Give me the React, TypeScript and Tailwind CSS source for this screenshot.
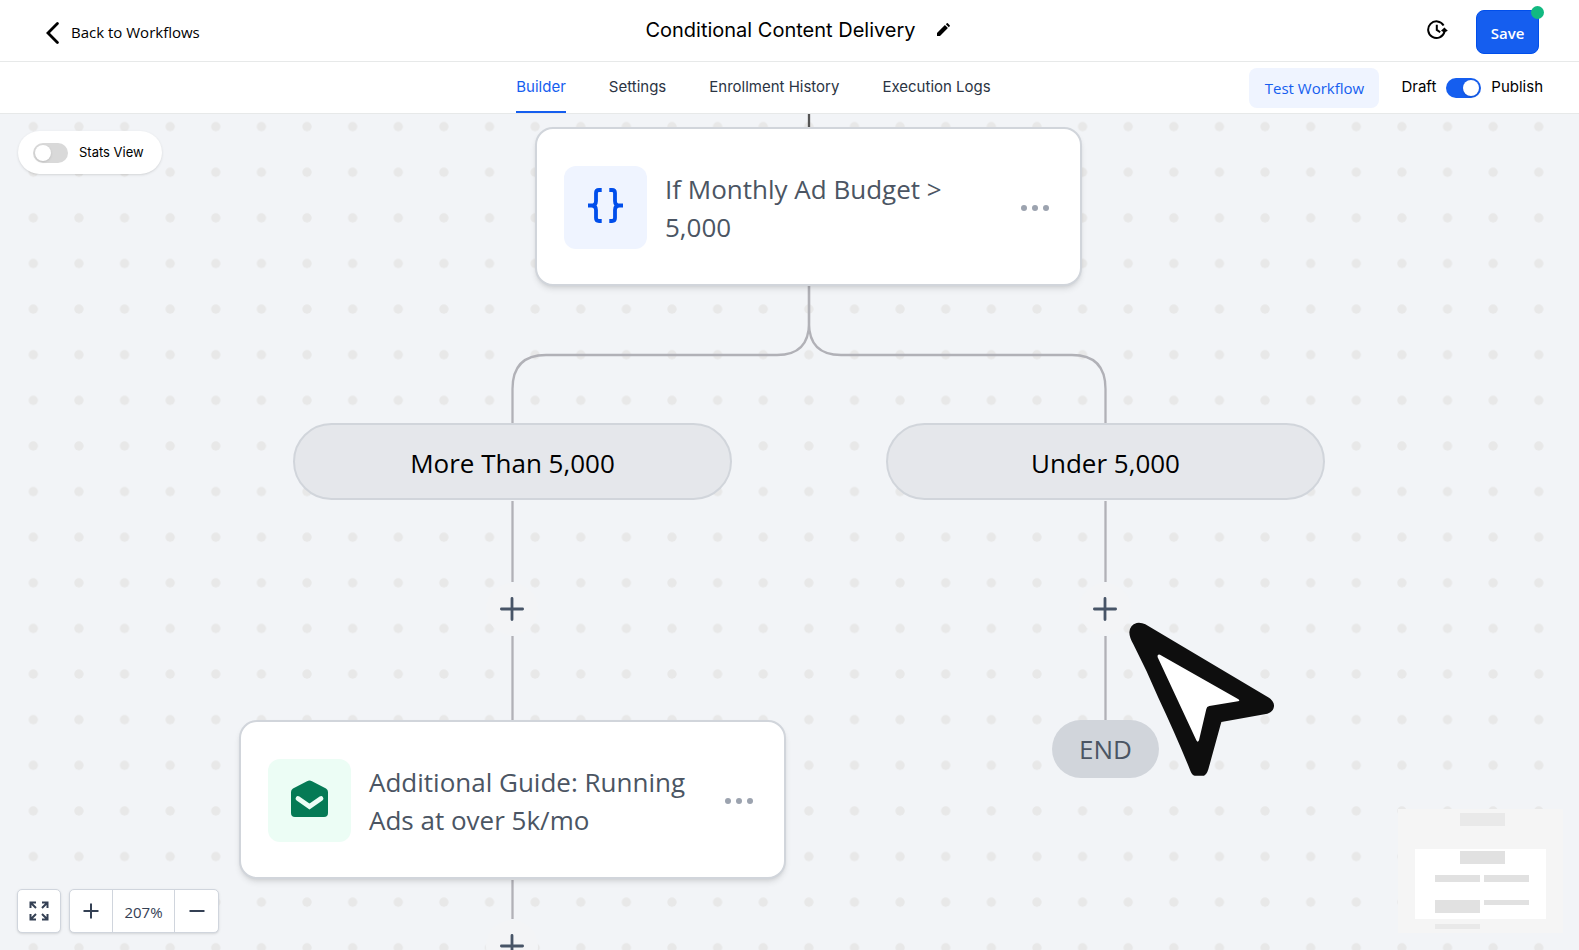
import React from "react";

const node = "font-['Open_Sans',sans-serif] text-[26px] leading-[38px]";

function Dots() {
  return (
    <svg className="absolute inset-0 h-full w-full" aria-hidden="true">
      <defs>
        <pattern id="grid" x="10.5" y="-10.2" width="45.62" height="45.62" patternUnits="userSpaceOnUse">
          <circle cx="22.8" cy="22.8" r="4.7" fill="#e8e8e8" />
        </pattern>
      </defs>
      <rect width="100%" height="100%" fill="url(#grid)" />
    </svg>
  );
}

function Connectors() {
  return (
    <svg className="absolute left-0 top-0" width="1579" height="836" fill="none" stroke="#b1b1b7" strokeWidth="2.3" aria-hidden="true">
      <path d="M809 0V14" stroke="#555555" />
      <path d="M809 172V209Q809 241 777 241H546Q512.5 241 512.5 275V310" />
      <path d="M809 172V209Q809 241 841 241H1072Q1105.5 241 1105.5 275V310" />
      <path d="M512.5 387V468M512.5 522V606M512.5 766V805" />
      <path d="M1105.5 387V468M1105.5 522V606" />
    </svg>
  );
}

function AddStep({ place }: { place: string }) {
  return (
    <button type="button" aria-label="Add step" className={`absolute flex h-[52px] w-[52px] items-center justify-center rounded-full bg-[#f3f4f6] ${place}`}>
      <svg width="26" height="26" viewBox="0 0 26 26" stroke="#475467" strokeWidth="2.8" strokeLinecap="round">
        <path d="M13 2.4V23.6M2.4 13H23.6" />
      </svg>
    </button>
  );
}

function StepCard({ place, tile, icon, title }: { place: string; tile: string; icon: React.ReactNode; title: string }) {
  return (
    <article className={`absolute flex h-[159px] w-[547px] items-center rounded-[18px] border-2 border-[#d1d5db] bg-white px-[27px] pt-[2px] shadow-md ${place}`}>
      <div className={`flex h-[83px] w-[83px] shrink-0 items-center justify-center rounded-xl ${tile}`}>{icon}</div>
      <h2 className={`ml-[18px] w-[330px] text-[#4b5563] ${node}`}>{title}</h2>
      <button type="button" aria-label="More actions" className="ml-auto mr-1 flex gap-[5px]">
        <span className="h-[6px] w-[6px] rounded-full bg-[#9ca3af]" />
        <span className="h-[6px] w-[6px] rounded-full bg-[#9ca3af]" />
        <span className="h-[6px] w-[6px] rounded-full bg-[#9ca3af]" />
      </button>
    </article>
  );
}

function Branch({ place, children }: { place: string; children: React.ReactNode }) {
  return (
    <div className={`absolute flex h-[77px] w-[439px] items-center justify-center rounded-full border-2 border-[#d1d5db] bg-[#e5e7eb] pt-[2px] text-black ${node} ${place}`}>
      {children}
    </div>
  );
}

function Toggle({ id, on, track }: { id: string; on?: boolean; track: string }) {
  return (
    <span className={`relative flex h-5 w-[35px] items-center rounded-full px-[2px] ${track}`}>
      <input id={id} type="checkbox" role="switch" defaultChecked={on} className="peer absolute inset-0 h-full w-full cursor-pointer opacity-0" />
      <span className="pointer-events-none h-4 w-4 rounded-full bg-white shadow peer-checked:translate-x-[15px]" />
    </span>
  );
}

function Header() {
  return (
    <header className="grid h-[62px] grid-cols-[1fr_auto_1fr] items-center border-b border-[#e7e9e9] bg-white">
      <a href="#workflows" className="ml-[46px] mt-1 flex items-center gap-3 font-['Open_Sans',sans-serif] text-[15px] font-medium text-black">
        <svg width="13" height="22" viewBox="0 0 13 22" fill="none" stroke="#000" strokeWidth="2.8" strokeLinecap="round">
          <path d="M11.4 1.6L2 11L11.4 20.4" />
        </svg>
        Back to Workflows
      </a>
      <div className="flex items-center gap-[21px] pb-[2px] pl-4">
        <h1 className="font-['Inter',sans-serif] text-[20px] leading-7 text-black">Conditional Content Delivery</h1>
        <button type="button" aria-label="Rename workflow">
          <svg width="13" height="13" viewBox="0 0 13 13" fill="#000">
            <path d="M0 13V10L7.9 2.1L10.9 5.1L3 13ZM8.9 1.3L9.8 .3Q10.3 -.1 10.8 .3L12.7 2.2Q13.1 2.7 12.7 3.2L11.8 4.2Z" />
          </svg>
        </button>
      </div>
      <div className="mr-10 mt-[2px] flex items-center justify-end gap-7">
        <button type="button" aria-label="Version history" className="-mt-1">
          <svg width="21" height="20" viewBox="0 0 21 20" fill="none" stroke="#000" strokeWidth="2">
            <path d="M16.6 5.4A8.3 8.3 0 1 0 17.5 11.8M9.8 4.8V9.9L13.2 12.3" />
            <path d="M14 10.8L17.4 7.6L20.8 10.8L17.4 12.4Z" fill="#000" stroke="none" />
          </svg>
        </button>
        <button type="button" className="relative h-11 w-[63px] rounded-lg border border-[#004eeb] bg-[#155eef] pt-1 font-['Open_Sans',sans-serif] text-[15px] font-semibold text-white">
          Save
          <span className="absolute -right-[6px] -top-[5px] h-[13px] w-[13px] rounded-full bg-[#12b981]" />
        </button>
      </div>
    </header>
  );
}

function Tabs() {
  return (
    <div className="grid h-[52px] grid-cols-[1fr_auto_1fr] border-b border-[#e7e9e9] bg-white font-['Inter',sans-serif] text-[15px]">
      <span />
      <nav className="ml-[-72px] flex gap-[43px] text-[#2b3443]">
        <a href="#builder" aria-current="page" className="border-b-2 border-[#155eef] pt-[14px] text-[#155eef]">Builder</a>
        <a href="#settings" className="pt-[14px]">Settings</a>
        <a href="#enrollment" className="pt-[14px]">Enrollment History</a>
        <a href="#logs" className="pt-[14px]">Execution Logs</a>
      </nav>
      <div className="mr-9 flex items-center justify-end">
        <button type="button" className="mr-[22px] h-10 w-[130px] rounded-lg bg-[#eff4ff] pt-[2px] font-['Open_Sans',sans-serif] text-[15px] font-medium text-[#155eef]">Test Workflow</button>
        <label htmlFor="publish" className="mr-[10px] text-black">Draft</label>
        <Toggle id="publish" on track="bg-[#155eef]" />
        <label htmlFor="publish" className="ml-[10px] text-black">Publish</label>
      </div>
    </div>
  );
}

function ZoomControls() {
  const box = "flex h-11 rounded-[5px] border border-[#d0d5dd] bg-white shadow-sm";
  return (
    <div className="absolute bottom-[17px] left-[17px] flex gap-2">
      <button type="button" aria-label="Fit to screen" className={`${box} w-11 items-center justify-center`}>
        <svg width="20" height="20" viewBox="0 0 20 20" fill="none" stroke="#344054" strokeWidth="2">
          <path d="M1.5 7V1.5H7M13 1.5H18.5V7M18.5 13V18.5H13M7 18.5H1.5V13M1.5 1.5L7 7M18.5 1.5L13 7M18.5 18.5L13 13M1.5 18.5L7 13" />
        </svg>
      </button>
      <div className={`${box} w-[150px] divide-x divide-[#d0d5dd]`}>
        <button type="button" aria-label="Zoom in" className="flex w-[43px] items-center justify-center">
          <svg width="16" height="16" viewBox="0 0 16 16" stroke="#344054" strokeWidth="2"><path d="M8 .5V15.5M.5 8H15.5" /></svg>
        </button>
        <output className="flex flex-1 items-center justify-center pt-[2px] font-['Open_Sans',sans-serif] text-[15px] text-[#344054]">207%</output>
        <button type="button" aria-label="Zoom out" className="flex w-[43px] items-center justify-center">
          <svg width="16" height="16" viewBox="0 0 16 16" stroke="#344054" strokeWidth="2"><path d="M.5 8H15.5" /></svg>
        </button>
      </div>
    </div>
  );
}

function MiniMap() {
  return (
    <svg className="absolute bottom-[17px] right-4" width="165" height="124" viewBox="0 0 165 124" aria-label="Mini map">
      <rect width="165" height="124" fill="#f5f5f5" />
      <rect x="17" y="40" width="131" height="70" fill="#fff" />
      <g fill="#e1e1e1">
        <rect x="62" y="42" width="45" height="13" />
        <rect x="37" y="66" width="45" height="7" />
        <rect x="86" y="66" width="45" height="7" />
        <rect x="37" y="91" width="45" height="13" />
        <rect x="86" y="91" width="45" height="5" />
      </g>
      <g fill="#e9e9e9">
        <rect x="62" y="4" width="45" height="13" />
        <rect x="37" y="115" width="45" height="5" />
      </g>
    </svg>
  );
}

function Pointer() {
  return (
    <svg className="pointer-events-none absolute left-[1127px] top-[506px]" width="150" height="160" viewBox="771 660 450 480" aria-hidden="true">
      <path d="M826 673L1197 893Q1213 904 1212 919Q1210 936 1192 941L1054 966L1015 1108Q1010 1124 1002 1127H974Q966 1125 961 1112Q920 1010 865 893Q832 815 790 733Q778 712 778 697Q780 674 800 669Q814 667 826 673Z" fill="#0e0e0e" />
      <path d="M870 764L1104 897Q1112 902 1104 904L1018 918Q1010 920 1009 927L987 1021Q983 1029 979 1021L863 772Q861 762 870 764Z" fill="#fff" />
    </svg>
  );
}

export default function App() {
  return (
    <div className="flex h-screen flex-col overflow-hidden bg-white">
      <Header />
      <Tabs />
      <main className="relative min-h-0 flex-1 overflow-hidden bg-[#f2f4f7]">
        <Dots />
        <Connectors />
        <StepCard
          place="left-[535px] top-[13px]"
          tile="bg-[#eff4ff]"
          title="If Monthly Ad Budget > 5,000"
          icon={
            <svg width="35" height="35" viewBox="0 0 35 35" className="mb-1" fill="none" stroke="#004eeb" strokeWidth="3.8">
              <path d="M13.7 2H11Q8 2 8 5V13Q8 17.5 3.5 17.5H0H3.5Q8 17.5 8 22V30Q8 33 11 33H13.7M21.3 2H24Q27 2 27 5V13Q27 17.5 31.5 17.5H35H31.5Q27 17.5 27 22V30Q27 33 24 33H21.3" />
            </svg>
          }
        />
        <Branch place="left-[293px] top-[309px]">More Than 5,000</Branch>
        <Branch place="left-[886px] top-[309px]">Under 5,000</Branch>
        <AddStep place="left-[486px] top-[469px]" />
        <AddStep place="left-[1079px] top-[469px]" />
        <StepCard
          place="left-[239px] top-[606px]"
          tile="bg-[#ecfdf5]"
          title="Additional Guide: Running Ads at over 5k/mo"
          icon={
            <svg width="37" height="37" viewBox="0 0 37 37" className="mb-1" fill="none">
              <path d="M16 1.2Q18.5 -.4 21 1.2L35 8.6Q37 10 37 12V33Q37 37 33 37H4Q0 37 0 33V12Q0 10 2 8.6Z" fill="#057a55" />
              <path d="M7 18.5L18.5 26.5L30 18.5" stroke="#ecfdf5" strokeWidth="4.8" strokeLinecap="round" />
            </svg>
          }
        />
        <AddStep place="left-[486px] top-[806px]" />
        <div className={`absolute left-[1052px] top-[606px] flex h-[58px] w-[107px] items-center justify-center rounded-full bg-[#d1d5db] text-[#4b5563] ${node}`}>END</div>
        <Pointer />
        <div className="absolute left-[18px] top-[17px] flex h-[43px] w-36 items-center gap-[11px] rounded-full bg-white pl-[15px] shadow-sm">
          <Toggle id="stats" track="bg-[#d9d9d9]" />
          <label htmlFor="stats" className="font-['Inter',sans-serif] text-[13px] text-black">Stats View</label>
        </div>
        <ZoomControls />
        <MiniMap />
      </main>
    </div>
  );
}
